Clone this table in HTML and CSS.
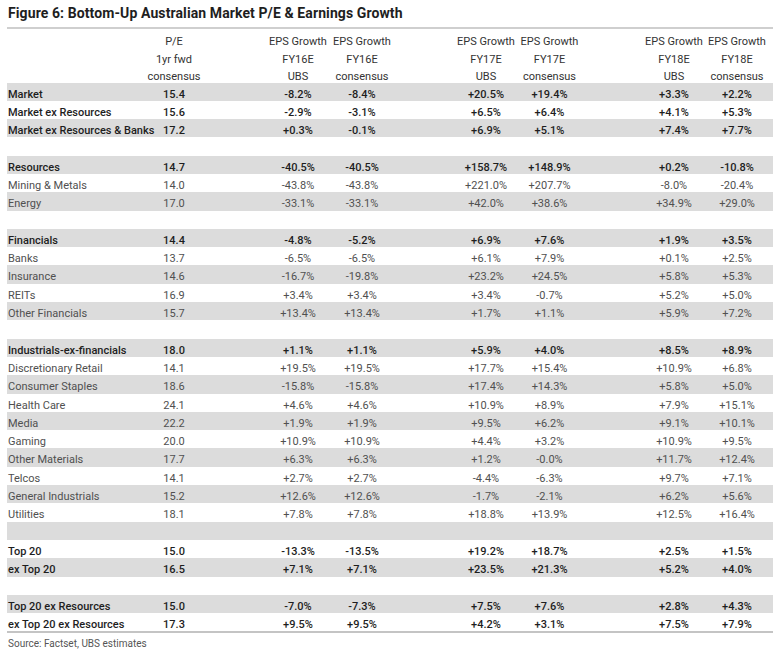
FILE: index.html
```html
<!DOCTYPE html>
<html lang="en">
<head>
<meta charset="utf-8">
<title>Figure 6</title>
<link rel="stylesheet" href="styles.css">
</head>
<body>
<div class="figure">
  <h1 class="title">Figure 6: Bottom-Up Australian Market P/E &amp; Earnings Growth</h1>
  <div class="table">
    <div class="row head">
      <div></div>
      <div>P/E<br>1yr fwd<br>consensus</div>
      <div>EPS Growth<br>FY16E<br>UBS</div>
      <div>EPS Growth<br>FY16E<br>consensus</div>
      <div>EPS Growth<br>FY17E<br>UBS</div>
      <div>EPS Growth<br>FY17E<br>consensus</div>
      <div>EPS Growth<br>FY18E<br>UBS</div>
      <div>EPS Growth<br>FY18E<br>consensus</div>
    </div>

    <div class="row main shade"><div>Market</div><div>15.4</div><div>-8.2%</div><div>-8.4%</div><div>+20.5%</div><div>+19.4%</div><div>+3.3%</div><div>+2.2%</div></div>
    <div class="row main"><div>Market ex Resources</div><div>15.6</div><div>-2.9%</div><div>-3.1%</div><div>+6.5%</div><div>+6.4%</div><div>+4.1%</div><div>+5.3%</div></div>
    <div class="row main shade"><div>Market ex Resources &amp; Banks</div><div>17.2</div><div>+0.3%</div><div>-0.1%</div><div>+6.9%</div><div>+5.1%</div><div>+7.4%</div><div>+7.7%</div></div>
    <div class="row blank"></div>

    <div class="row main shade"><div>Resources</div><div>14.7</div><div>-40.5%</div><div>-40.5%</div><div>+158.7%</div><div>+148.9%</div><div>+0.2%</div><div>-10.8%</div></div>
    <div class="row"><div>Mining &amp; Metals</div><div>14.0</div><div>-43.8%</div><div>-43.8%</div><div>+221.0%</div><div>+207.7%</div><div>-8.0%</div><div>-20.4%</div></div>
    <div class="row shade"><div>Energy</div><div>17.0</div><div>-33.1%</div><div>-33.1%</div><div>+42.0%</div><div>+38.6%</div><div>+34.9%</div><div>+29.0%</div></div>
    <div class="row blank"></div>

    <div class="row main shade"><div>Financials</div><div>14.4</div><div>-4.8%</div><div>-5.2%</div><div>+6.9%</div><div>+7.6%</div><div>+1.9%</div><div>+3.5%</div></div>
    <div class="row"><div>Banks</div><div>13.7</div><div>-6.5%</div><div>-6.5%</div><div>+6.1%</div><div>+7.9%</div><div>+0.1%</div><div>+2.5%</div></div>
    <div class="row shade"><div>Insurance</div><div>14.6</div><div>-16.7%</div><div>-19.8%</div><div>+23.2%</div><div>+24.5%</div><div>+5.8%</div><div>+5.3%</div></div>
    <div class="row"><div>REITs</div><div>16.9</div><div>+3.4%</div><div>+3.4%</div><div>+3.4%</div><div>-0.7%</div><div>+5.2%</div><div>+5.0%</div></div>
    <div class="row shade"><div>Other Financials</div><div>15.7</div><div>+13.4%</div><div>+13.4%</div><div>+1.7%</div><div>+1.1%</div><div>+5.9%</div><div>+7.2%</div></div>
    <div class="row blank"></div>

    <div class="row main shade"><div>Industrials-ex-financials</div><div>18.0</div><div>+1.1%</div><div>+1.1%</div><div>+5.9%</div><div>+4.0%</div><div>+8.5%</div><div>+8.9%</div></div>
    <div class="row"><div>Discretionary Retail</div><div>14.1</div><div>+19.5%</div><div>+19.5%</div><div>+17.7%</div><div>+15.4%</div><div>+10.9%</div><div>+6.8%</div></div>
    <div class="row shade"><div>Consumer Staples</div><div>18.6</div><div>-15.8%</div><div>-15.8%</div><div>+17.4%</div><div>+14.3%</div><div>+5.8%</div><div>+5.0%</div></div>
    <div class="row"><div>Health Care</div><div>24.1</div><div>+4.6%</div><div>+4.6%</div><div>+10.9%</div><div>+8.9%</div><div>+7.9%</div><div>+15.1%</div></div>
    <div class="row shade"><div>Media</div><div>22.2</div><div>+1.9%</div><div>+1.9%</div><div>+9.5%</div><div>+6.2%</div><div>+9.1%</div><div>+10.1%</div></div>
    <div class="row"><div>Gaming</div><div>20.0</div><div>+10.9%</div><div>+10.9%</div><div>+4.4%</div><div>+3.2%</div><div>+10.9%</div><div>+9.5%</div></div>
    <div class="row shade"><div>Other Materials</div><div>17.7</div><div>+6.3%</div><div>+6.3%</div><div>+1.2%</div><div>-0.0%</div><div>+11.7%</div><div>+12.4%</div></div>
    <div class="row"><div>Telcos</div><div>14.1</div><div>+2.7%</div><div>+2.7%</div><div>-4.4%</div><div>-6.3%</div><div>+9.7%</div><div>+7.1%</div></div>
    <div class="row shade"><div>General Industrials</div><div>15.2</div><div>+12.6%</div><div>+12.6%</div><div>-1.7%</div><div>-2.1%</div><div>+6.2%</div><div>+5.6%</div></div>
    <div class="row"><div>Utilities</div><div>18.1</div><div>+7.8%</div><div>+7.8%</div><div>+18.8%</div><div>+13.9%</div><div>+12.5%</div><div>+16.4%</div></div>
    <div class="row blank shade"></div>

    <div class="row main"><div>Top 20</div><div>15.0</div><div>-13.3%</div><div>-13.5%</div><div>+19.2%</div><div>+18.7%</div><div>+2.5%</div><div>+1.5%</div></div>
    <div class="row main shade"><div>ex Top 20</div><div>16.5</div><div>+7.1%</div><div>+7.1%</div><div>+23.5%</div><div>+21.3%</div><div>+5.2%</div><div>+4.0%</div></div>
    <div class="row blank"></div>

    <div class="row main shade"><div>Top 20 ex Resources</div><div>15.0</div><div>-7.0%</div><div>-7.3%</div><div>+7.5%</div><div>+7.6%</div><div>+2.8%</div><div>+4.3%</div></div>
    <div class="row main last"><div>ex Top 20 ex Resources</div><div>17.3</div><div>+9.5%</div><div>+9.5%</div><div>+4.2%</div><div>+3.1%</div><div>+7.5%</div><div>+7.9%</div></div>
  </div>
  <p class="source">Source: Factset, UBS estimates</p>
</div>
</body>
</html>
```

FILE: styles.css
```css
html, body {
  margin: 0;
  padding: 0;
  background: #ffffff;
}

.figure {
  width: 766px;
  padding: 0 0 0 7px;
  font-family: Roboto, "Liberation Sans", sans-serif;
  color: #505050;
}

.title {
  margin: 0;
  padding: 5px 0 0 1px;
  height: 22px;
  font-size: 14px;
  line-height: 17px;
  font-weight: bold;
  color: #1e1e1e;
  letter-spacing: 0.1px;
}

.table {
  border-top: 2px solid #cfcfcf;
  border-bottom: 2px solid #c4c4c4;
}

.row {
  display: grid;
  grid-template-columns: 123px 88px 48px 64px 64px 60px 64px 63px 61px 64px 62px;
  height: 18.31px;
  box-sizing: border-box;
  padding-top: 5px;
  align-items: start;
  font-size: 11px;
  line-height: 14px;
}

.row > :nth-child(1) {
  padding-left: 1px;
  white-space: nowrap;
}

.row > :nth-child(n+2) {
  text-align: center;
  white-space: nowrap;
}

.row > :nth-child(3) { grid-column: 4; }
.row > :nth-child(5) { grid-column: 7; }
.row > :nth-child(7) { grid-column: 10; }

.row.head {
  height: 53.5px;
  padding-top: 4px;
  line-height: 17.5px;
  color: #333333;
}

.row.shade {
  background: #dcdcdc;
}

.row.main {
  color: #1e1e1e;
  font-weight: 500;
}

.source {
  margin: 0;
  padding: 4px 0 0 1px;
  font-size: 10px;
  line-height: 14px;
  color: #555555;
}
```
